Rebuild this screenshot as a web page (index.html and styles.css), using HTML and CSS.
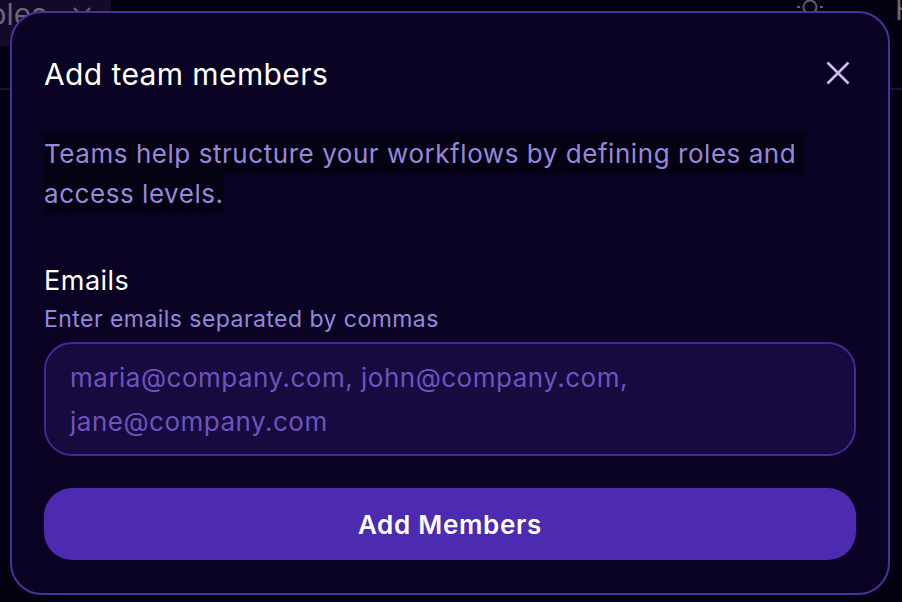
FILE: index.html
```html
<!DOCTYPE html>
<html lang="en">
<head>
<meta charset="utf-8">
<title>Add team members</title>
<link rel="stylesheet" href="styles.css">
</head>
<body>
<header class="topbar">
  <div class="tab">
    <span class="tab-label">Roles</span>
    <svg class="tab-close" width="20" height="20" viewBox="0 0 20 20"><path d="M2 2 L18 18 M18 2 L2 18"/></svg>
  </div>
  <div class="topbar-right">
    <svg class="sun" width="30" height="30" viewBox="0 0 30 30"><circle cx="15" cy="15" r="6.5"/><path d="M15 2v3M15 25v3M2 15h3M25 15h3M5.800 5.800l2.100 2.100M22.100 22.100l2.100 2.100M5.800 24.200l2.100-2.100M22.100 7.900l2.100-2.100"/></svg>
    <span class="help">Help</span>
  </div>
</header>
<section class="modal">
  <div class="modal-head">
    <h1 class="modal-title">Add team members</h1>
    <button class="close" aria-label="Close">
      <svg width="24" height="24" viewBox="0 0 24 24"><path d="M1.500 1.500 L22.500 22.500 M22.500 1.500 L1.500 22.500"/></svg>
    </button>
  </div>
  <p class="desc"><span class="desc-mark">Teams help structure your workflows by defining roles and<span class="desc-gap"></span><br>access levels.</span></p>
  <div class="field">
    <div class="field-label">Emails</div>
    <div class="field-hint">Enter emails separated by commas</div>
    <div class="input">maria@company.com, john@company.com, jane@company.com</div>
  </div>
  <button class="submit">Add Members</button>
</section>
</body>
</html>
```
FILE: styles.css
```css
* { box-sizing: border-box; }
html, body { margin: 0; height: 100%; }
body {
  background: #030110;
  font-family: Inter, "Liberation Sans", sans-serif;
  overflow: hidden;
  position: relative;
}
.topbar {
  height: 90px;
  border-bottom: 2px solid #1c1238;
  display: flex;
  justify-content: space-between;
  align-items: flex-start;
}
.tab {
  width: 111px;
  height: 46px;
  background: #140929;
  display: flex;
  align-items: center;
  justify-content: flex-end;
  padding-right: 19px;
  gap: 25px;
  overflow: hidden;
}
.tab-label {
  color: #6a6776;
  font-size: 30px;
  line-height: 30px;
  white-space: nowrap;
  margin-top: -18px;
}
.tab-close { flex: none; margin-top: -14px; }
.tab-close path { stroke: #6a6776; stroke-width: 2; fill: none; }
.topbar-right {
  display: flex;
  gap: 70px;
  width: 107px;
  overflow: hidden;
  margin-top: -8px;
  flex: none;
}
.sun { flex: none; }
.sun circle, .sun path { stroke: #5e5c66; stroke-width: 2; fill: none; }
.help { color: #6a6776; font-size: 30px; line-height: 30px; margin-top: 2px; }
.modal {
  position: absolute;
  left: 10px;
  top: 11px;
  width: 880px;
  height: 584px;
  background: #090222;
  border: 2px solid #4a2fa0;
  border-radius: 32px;
  padding: 0 32px;
  display: flex;
  flex-direction: column;
}
.modal-head {
  display: flex;
  justify-content: space-between;
  align-items: center;
  height: 62px;
  margin-top: 30px;
}
.modal-title {
  margin: 0;
  color: #fff;
  font-size: 30px;
  font-weight: 400;
  letter-spacing: 0.4px;
  line-height: 40px;
}
.close {
  background: none;
  border: 0;
  padding: 0;
  width: 24px;
  height: 24px;
  margin-right: 6px;
  margin-top: -2px;
  display: flex;
}
.close path { stroke: #c9b9f8; stroke-width: 2.600; fill: none; }
.desc {
  margin: 29px 0 0;
  font-size: 26px;
  letter-spacing: 0.55px;
  line-height: 40px;
  color: #9787db;
}
.desc-mark {
  background: #040212;
  padding: 5px 0;
  -webkit-box-decoration-break: clone;
  box-decoration-break: clone;
}
.desc-gap { display: inline-block; width: 8px; }
.field { margin-top: 47px; display: flex; flex-direction: column; }
.field-label { color: #fff; font-size: 27px; line-height: 40px; font-weight: 400; letter-spacing: 0.5px; }
.field-hint { color: #9787db; font-size: 23px; letter-spacing: 0.45px; line-height: 36px; }
.input {
  margin-top: 5px;
  height: 114px;
  background: #170a3e;
  border: 2px solid #44289a;
  border-radius: 28px;
  padding: 12px 24px;
  color: #6d53c0;
  font-size: 26px;
  letter-spacing: 0.5px;
  line-height: 44px;
  width: 812px;
}
.submit {
  margin-top: 32px;
  width: 812px;
  height: 72px;
  border: 0;
  border-radius: 28px;
  background: #4d2bb0;
  color: #fff;
  font-family: inherit;
  font-size: 26px;
  letter-spacing: 0.7px;
  font-weight: 600;
}
```
